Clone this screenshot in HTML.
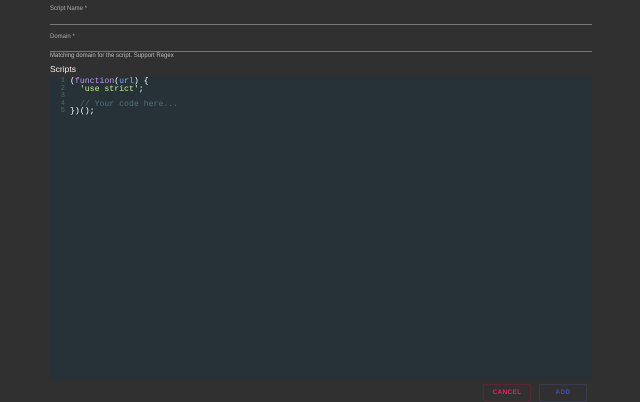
<!DOCTYPE html>
<html><head><style>
body{margin:0;width:640px;height:400px;background:#303030;font-family:"Liberation Sans",sans-serif;overflow:hidden;position:relative}
.lbl{position:absolute;left:50px;font-size:6px;color:#aaa}
.line{position:absolute;left:50px;width:542px;height:1px;background:#777}
.ed{position:absolute;left:50px;top:77px;width:542px;height:303px;background:#263238;font-family:"Liberation Mono",monospace;font-size:8.2px;color:#eeffff}
.ln{position:absolute;left:0;width:15px;text-align:right;color:#55666e;font-size:7px}
.cd{position:absolute;left:20px;white-space:pre}
.btn{position:absolute;top:384px;height:18px;border:1px solid;border-radius:2px;font-size:6.5px;font-weight:bold;text-align:center;line-height:15px;letter-spacing:.3px;box-sizing:border-box}
</style></head><body>
<div class="lbl" style="top:6px">Script Name *</div>
<div class="line" style="top:24px"></div>
<div class="lbl" style="top:34px">Domain *</div>
<div class="line" style="top:51px"></div>
<div class="lbl" style="top:53px;color:#bbb">Matching domain for the script. Support Regex</div>
<div style="position:absolute;left:50px;top:64px;font-size:8.5px;color:#eee">Scripts</div>
<div class="ed">
<div class="ln" style="top:0">1</div><div class="cd" style="top:0">(<span style="color:#c792ea">function</span>(<span style="color:#82aaff">url</span>) {</div>
<div class="ln" style="top:7.5px">2</div><div class="cd" style="top:7.5px">  <span style="color:#c3e88d">'use strict'</span>;</div>
<div class="ln" style="top:15px">3</div>
<div class="ln" style="top:22.5px">4</div><div class="cd" style="top:22.5px;color:#546e7a">  // Your code here...</div>
<div class="ln" style="top:30px">5</div><div class="cd" style="top:30px">})();</div>
</div>
<div class="btn" style="left:483px;width:48px;color:#e91e63;border-color:#5a2535">CANCEL</div>
<div class="btn" style="left:539px;width:48px;color:#3f51b5;border-color:#383a4c">ADD</div>
</body></html>
